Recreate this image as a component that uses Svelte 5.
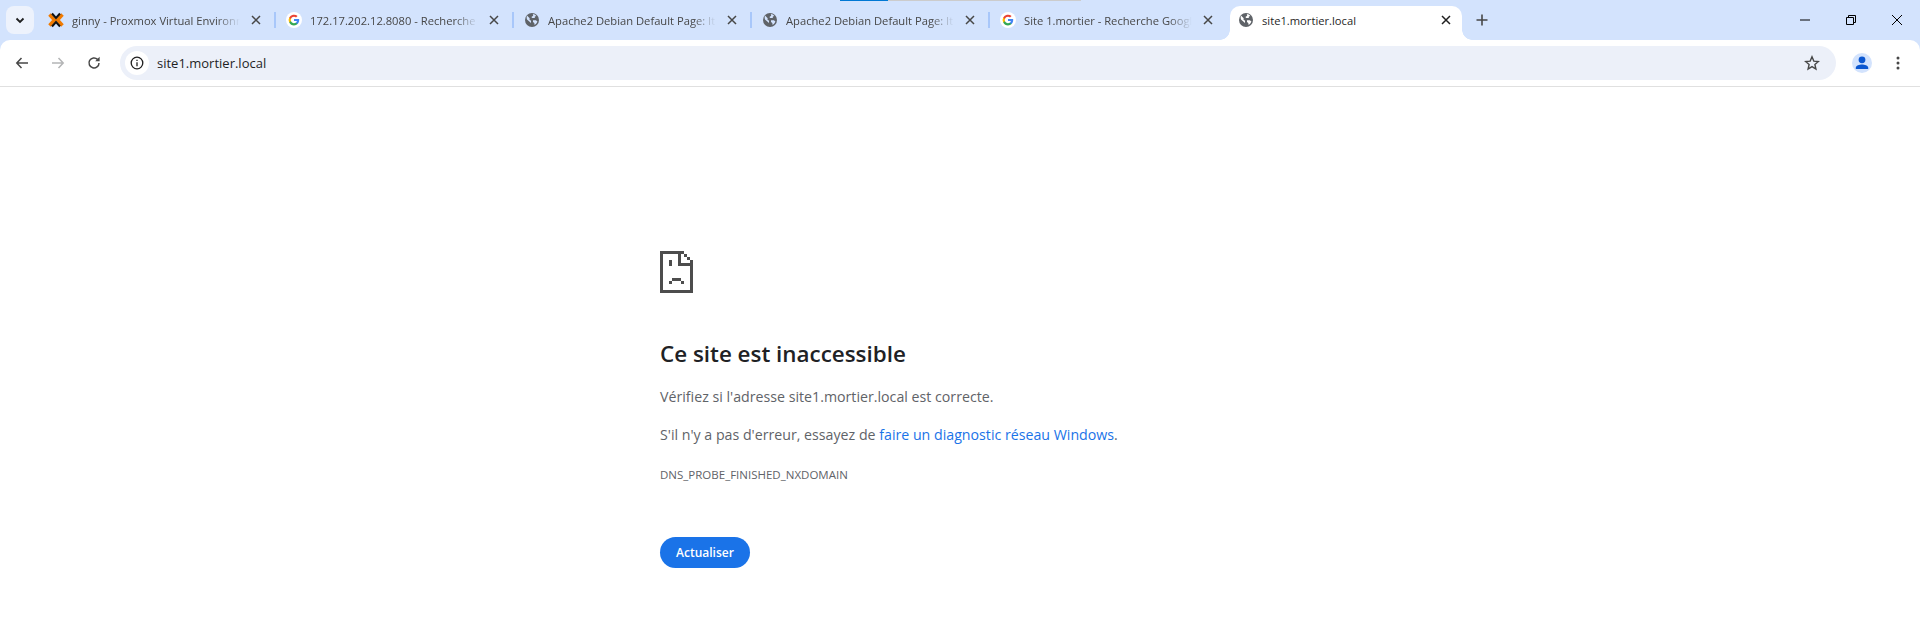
<script lang="ts">
  type Tab = { title: string; icon: 'proxmox' | 'google' | 'globe'; active?: boolean };
  const tabs: Tab[] = [
    { title: 'ginny - Proxmox Virtual Environment', icon: 'proxmox' },
    { title: '172.17.202.12.8080 - Recherche Google', icon: 'google' },
    { title: 'Apache2 Debian Default Page: It works', icon: 'globe' },
    { title: 'Apache2 Debian Default Page: It works', icon: 'globe' },
    { title: 'Site 1.mortier - Recherche Google', icon: 'google' },
    { title: 'site1.mortier.local', icon: 'globe', active: true }
  ];
</script>

{#snippet favicon(kind: Tab['icon'])}
  {#if kind === 'proxmox'}
    <svg class="fav" viewBox="0 0 16 16">
      <path d="M1.500 2.500 6.500 8l-5 5.500M14.500 2.500 9.500 8l5 5.500" stroke="#f07a00" stroke-width="3.400" fill="none" />
      <path d="M4 1.500 8 6 12 1.500M4 14.500 8 10 12 14.500" stroke="#111" stroke-width="2" fill="none" />
    </svg>
  {:else if kind === 'google'}
    <svg class="fav" viewBox="0 0 16 16">
      <circle cx="8" cy="8" r="8" fill="#fff" />
      <path d="M13.200 8.100c0-.4 0-.8-.1-1.100H8v2.100h2.900a2.500 2.500 0 0 1-1.100 1.600v1.400h1.800c1-1 1.600-2.300 1.600-4z" fill="#4285f4" />
      <path d="M8 13.400c1.500 0 2.700-.5 3.600-1.300l-1.800-1.400c-.5.300-1.100.5-1.800.5-1.400 0-2.600-.9-3-2.200H3.200v1.400A5.400 5.400 0 0 0 8 13.400z" fill="#34a853" />
      <path d="M5 9a3.200 3.200 0 0 1 0-2V5.600H3.200a5.400 5.400 0 0 0 0 4.800z" fill="#fbbc05" />
      <path d="M8 4.800c.8 0 1.500.3 2 .8l1.600-1.600A5.400 5.400 0 0 0 3.200 5.600L5 7c.4-1.300 1.600-2.200 3-2.200z" fill="#ea4335" />
    </svg>
  {:else}
    <svg class="fav" viewBox="0 0 16 16">
      <circle cx="8" cy="8" r="7" fill="#5f6368" />
      <path class="land" d="M3 3.600 5.700 6.200 5.400 7.400 7 8.800V11L3 7.500c-.5-1.400-.4-2.700 0-3.900zM8.800 2.100c1.500.2 2.700.8 3.600 1.800L10.800 4.600V6H8.200L7.400 5l1.800-1.200zM9 8.200h2.900l1.500 1.300c-.5 1.500-1.500 2.700-2.800 3.400l-.3-1.900L9 10z" />
    </svg>
  {/if}
{/snippet}

<div class="browser">
  <div class="progress"><span class="seg-blue"></span><span class="seg-grey"></span></div>

  <header class="strip">
    <button class="tab-search" aria-label="Rechercher dans les onglets">
      <svg viewBox="0 0 16 16"><path d="M4.500 6.500 8 10l3.500-3.500" fill="none" stroke="#1f1f1f" stroke-width="1.800" /></svg>
    </button>
    <div class="tabs">
      {#each tabs as tab, i}
        <div class="tab" class:active={tab.active} class:before-active={i === tabs.length - 2}>
          {@render favicon(tab.icon)}
          <span class="title">{tab.title}</span>
          <svg class="close" viewBox="0 0 16 16"><path d="M4 4l8 8M12 4l-8 8" stroke="currentColor" stroke-width="1.500" fill="none" /></svg>
        </div>
      {/each}
    </div>
    <svg class="plus" viewBox="0 0 16 16"><path d="M8 2.500v11M2.500 8h11" stroke="#474747" stroke-width="1.600" fill="none" /></svg>
    <div class="window-controls">
      <svg viewBox="0 0 16 16"><path d="M3 8h10" stroke="#000" fill="none" /></svg>
      <svg viewBox="0 0 16 16"><path d="M3.500 5.500h7v7h-7zM5.500 5V3.500h7v7H11" stroke="#000" fill="none" /></svg>
      <svg viewBox="0 0 16 16"><path d="M3 3l10 10M13 3L3 13" stroke="#000" fill="none" /></svg>
    </div>
  </header>

  <nav class="toolbar">
    <svg class="nav-icon first" viewBox="0 0 16 16"><path d="M14 8H3M7.500 3 2.800 8l4.700 5" stroke="#474747" stroke-width="1.500" fill="none" /></svg>
    <svg class="nav-icon" viewBox="0 0 16 16"><path d="M2 8h11M8.500 3l4.700 5-4.700 5" stroke="#b4b5b6" stroke-width="1.500" fill="none" /></svg>
    <svg class="nav-icon" viewBox="0 0 16 16"><path d="M13 8a5 5 0 1 1-1.500-3.600" stroke="#474747" stroke-width="1.500" fill="none" /><path d="M13.600 1.800v4.400H9.200z" fill="#474747" /></svg>
    <div class="omnibox">
      <span class="chip">
        <svg viewBox="0 0 16 16"><circle cx="8" cy="8" r="5.800" stroke="#1f1f1f" stroke-width="1.300" fill="none" /><path d="M8 7.200v4M8 4.800v1.300" stroke="#1f1f1f" stroke-width="1.300" fill="none" /></svg>
      </span>
      <span class="url">site1.mortier.local</span>
      <svg class="star" viewBox="0 0 16 16"><path d="M8 1.800l1.800 4.300 4.600.4-3.500 3 1 4.500L8 11.600 4.100 14l1-4.500-3.500-3 4.600-.4z" stroke="#474747" stroke-width="1.400" fill="none" /></svg>
    </div>
    <span class="avatar">
      <svg viewBox="0 0 20 20"><circle cx="10" cy="6.800" r="3.400" fill="#0b57d0" /><path d="M3.800 16v-1.300C3.800 12.500 7.500 11.500 10 11.500s6.200 1 6.200 3.200V16z" fill="#0b57d0" /></svg>
    </span>
    <svg class="menu" viewBox="0 0 16 16"><circle cx="8" cy="3" r="1.500" fill="#474747" /><circle cx="8" cy="8" r="1.500" fill="#474747" /><circle cx="8" cy="13" r="1.500" fill="#474747" /></svg>
  </nav>

  <main class="page">
    <div class="wrapper">
      <svg class="sad" width="33" height="42" viewBox="0 0 33 42" shape-rendering="crispEdges">
        <path d="M0 0h24v3H3v36h27V12h3v30H0z" fill="#4d4d4d" />
        <path d="M18 3h3v9h12v3H18zM24 3h3v3h-3zM27 6h3v3h-3zM30 9h3v3h-3z" fill="#4d4d4d" />
        <path d="M9 9h3v6H9zM9 30h3v3H9zM12 27h9v3h-9zM21 30h3v3h-3z" fill="#4d4d4d" />
      </svg>
      <h1>Ce site est inaccessible</h1>
      <p class="first">Vérifiez si l'adresse site1.mortier.local est correcte.</p>
      <p>S'il n'y a pas d'erreur, essayez de <a href="#diagnostic">faire un diagnostic réseau Windows</a>.</p>
      <div class="code">DNS_PROBE_FINISHED_NXDOMAIN</div>
      <button class="reload">Actualiser</button>
    </div>
  </main>
</div>

<style>
  :global(body) {
    margin: 0;
    background: #fff;
    font-family: 'Open Sans', 'Noto Sans', sans-serif;
  }
  .browser {
    position: relative;
    display: flex;
    flex-direction: column;
    height: 628px;
    overflow: hidden;
    background: #d3e3fd;
  }
  .progress {
    position: absolute;
    top: 0;
    left: 840px;
    display: flex;
    height: 1px;
  }
  .seg-blue {
    width: 48px;
    background: #0078d4;
  }
  .seg-grey {
    width: 193px;
    background: #ccc;
  }

  .strip {
    display: flex;
    align-items: flex-start;
    flex: none;
    height: 40px;
  }
  .tab-search {
    display: flex;
    align-items: center;
    justify-content: center;
    width: 28px;
    height: 28px;
    margin: 6px 0 0 6px;
    padding: 0;
    border: 0;
    border-radius: 8px;
    background: #edf2fc;
  }
  .tab-search svg {
    width: 16px;
    height: 16px;
  }
  .tabs {
    display: flex;
    margin-left: 4px;
    padding-top: 6px;
  }
  .tab {
    position: relative;
    box-sizing: border-box;
    display: flex;
    align-items: center;
    width: 238px;
    height: 34px;
    padding: 0 12px 6px 10px;
    font-size: 11.2px;
    color: #474747;
  }
  .tab::after {
    content: '';
    position: absolute;
    right: 0;
    top: 6px;
    width: 2px;
    height: 16px;
    background: #a8c7fa;
  }
  .tab.before-active::after {
    display: none;
  }
  .tab.active {
    width: 232px;
    margin-left: 2px;
    padding: 0 8px 6px 8px;
    border-radius: 10px 10px 0 0;
    background: #fff;
    color: #1f1f1f;
  }
  .tab.active::before,
  .tab.active::after {
    content: '';
    position: absolute;
    top: auto;
    bottom: 0;
    width: 10px;
    height: 10px;
  }
  .tab.active::before {
    left: -10px;
    background: radial-gradient(circle at 0 0, transparent 9.5px, #fff 10px);
  }
  .tab.active::after {
    right: -10px;
    background: radial-gradient(circle at 100% 0, transparent 9.5px, #fff 10px);
  }
  .fav {
    flex: none;
    width: 16px;
    height: 16px;
    margin-right: 8px;
  }
  .land {
    fill: #d3e3fd;
  }
  .active .land {
    fill: #fff;
  }
  .title {
    flex: 1;
    overflow: hidden;
    white-space: nowrap;
    -webkit-mask-image: linear-gradient(90deg, #000 86%, transparent);
    mask-image: linear-gradient(90deg, #000 86%, transparent);
  }
  .active .title {
    -webkit-mask-image: none;
    mask-image: none;
  }
  .close {
    flex: none;
    width: 16px;
    height: 16px;
    margin-left: 8px;
  }
  .plus {
    width: 16px;
    height: 16px;
    margin: 12px 0 0 12px;
  }
  .window-controls {
    display: flex;
    gap: 30px;
    margin: 12px 15px 0 auto;
  }
  .window-controls svg {
    width: 16px;
    height: 16px;
  }

  .toolbar {
    box-sizing: border-box;
    display: flex;
    flex: none;
    align-items: center;
    height: 47px;
    padding-bottom: 1px;
    border-bottom: 1px solid #e0e0e0;
    border-radius: 10px 10px 0 0;
    background: #fff;
  }
  .nav-icon {
    width: 16px;
    height: 16px;
    margin-left: 20px;
    flex: none;
  }
  .nav-icon.first {
    margin-left: 14px;
  }
  .omnibox {
    flex: 1;
    display: flex;
    align-items: center;
    height: 34px;
    margin-left: 18px;
    padding-right: 16px;
    border-radius: 17px;
    background: #ecf0f9;
  }
  .chip {
    display: flex;
    align-items: center;
    justify-content: center;
    width: 24px;
    height: 24px;
    margin-left: 5px;
    border-radius: 50%;
    background: #fff;
  }
  .chip svg {
    width: 16px;
    height: 16px;
  }
  .url {
    flex: 1;
    margin-left: 8px;
    font-size: 13px;
    color: #1f1f1f;
  }
  .star {
    width: 16px;
    height: 16px;
  }
  .avatar {
    display: flex;
    align-items: center;
    justify-content: center;
    width: 20px;
    height: 20px;
    margin-left: 16px;
    border-radius: 50%;
    background: #d3e3fd;
  }
  .avatar svg {
    width: 20px;
    height: 20px;
  }
  .menu {
    width: 16px;
    height: 16px;
    margin: 0 14px 0 18px;
  }

  .page {
    flex: 1;
    padding-top: 164px;
    background: #fff;
  }
  .wrapper {
    width: 600px;
    margin: 0 auto;
  }
  .sad {
    display: block;
  }
  h1 {
    margin: 46px 0 0;
    font-size: 22.4px;
    line-height: 30px;
    font-weight: 600;
    color: #202124;
  }
  p {
    margin: 18px 0 0;
    font-size: 14.2px;
    line-height: 20px;
    color: #5f6368;
  }
  a {
    color: #1a73e8;
    text-decoration: none;
  }
  .code {
    margin-top: 20px;
    font-size: 11.5px;
    line-height: 20px;
    color: #5f6368;
  }
  .reload {
    display: block;
    margin-top: 52px;
    padding: 0 16px;
    height: 31px;
    border: 0;
    border-radius: 16px;
    background: #1a73e8;
    color: #fff;
    font: 600 12px 'Open Sans', sans-serif;
  }
</style>
